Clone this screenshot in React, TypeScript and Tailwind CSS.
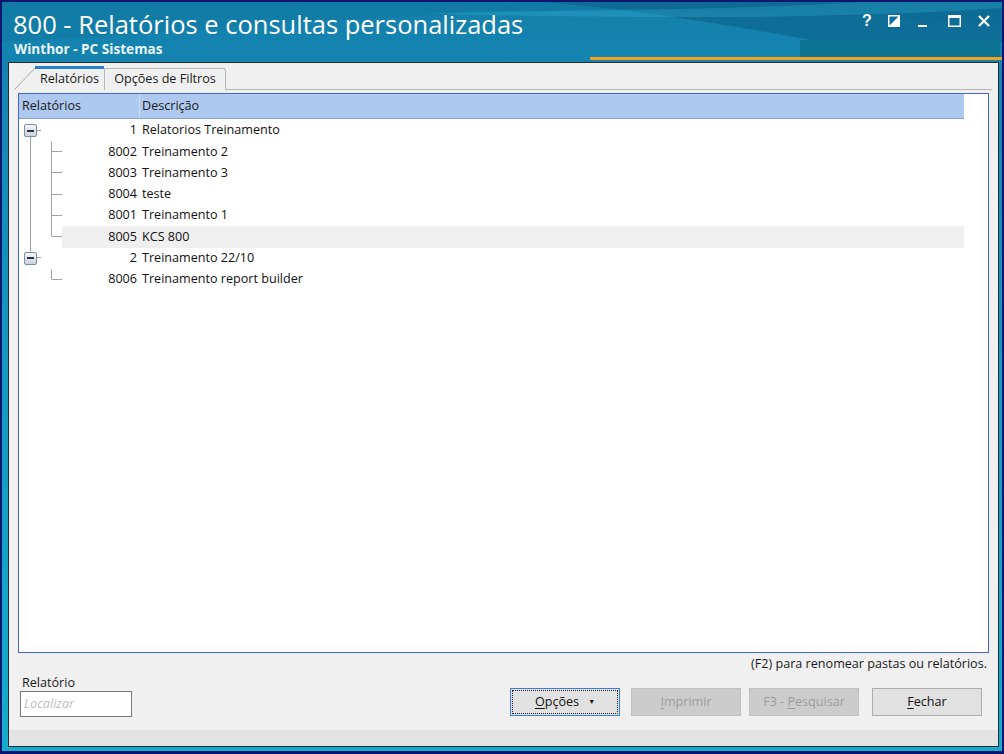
interface Row {
  code: string;
  text: string;
  level: 0 | 1;
  selected?: boolean;
}

const rows: Row[] = [
  { code: '1', text: 'Relatorios Treinamento', level: 0 },
  { code: '8002', text: 'Treinamento 2', level: 1 },
  { code: '8003', text: 'Treinamento 3', level: 1 },
  { code: '8004', text: 'teste', level: 1 },
  { code: '8001', text: 'Treinamento 1', level: 1 },
  { code: '8005', text: 'KCS 800', level: 1, selected: true },
  { code: '2', text: 'Treinamento 22/10', level: 0 },
  { code: '8006', text: 'Treinamento report builder', level: 1 },
];

const ui = { fontFamily: '"Open Sans", "Noto Sans", sans-serif' };

function MinusBox() {
  return (
    <span className="flex h-[13px] w-[13px] items-center justify-center rounded-[2px] border border-[#7d8ea3] bg-gradient-to-b from-[#f4f6f9] to-[#c9d2dd]">
      <span className="h-[2px] w-[7px] bg-[#2b3440]" />
    </span>
  );
}

// tree connector lines for the whole body
function TreeLines() {
  const h = 21.3;
  const c = (i: number) => Math.round(i * h + h / 2) + 0.5;
  return (
    <svg className="pointer-events-none absolute left-0 top-0" width="70" height="200">
      <g stroke="#a0a0a0" strokeWidth="1" fill="none">
        <line x1="11.5" y1={c(0) + 6} x2="11.5" y2={c(6) - 6} />
        <line x1="18" y1={c(0)} x2="22" y2={c(0)} />
        <line x1="18" y1={c(6)} x2="22" y2={c(6)} />
        <line x1="32.5" y1={c(1) - 10} x2="32.5" y2={c(5)} />
        {[1, 2, 3, 4, 5].map((i) => (
          <line key={i} x1="33" y1={c(i)} x2="43" y2={c(i)} />
        ))}
        <line x1="32.5" y1={c(7) - 10} x2="32.5" y2={c(7)} />
        <line x1="33" y1={c(7)} x2="43" y2={c(7)} />
      </g>
    </svg>
  );
}

function Btn({
  label,
  u,
  rest,
  disabled,
  focused,
  className,
  dropdown,
}: {
  label?: string;
  u: string;
  rest: string;
  disabled?: boolean;
  focused?: boolean;
  className?: string;
  dropdown?: boolean;
}) {
  return (
    <div
      className={`flex h-[28px] w-[110px] items-center justify-center text-[12.6px] ${
        disabled
          ? 'border border-[#bfbfbf] bg-[#cccccc] text-[#9c9c9c]'
          : focused
            ? 'border border-[#3c7fd6] bg-[#e1e1e1] p-[1px] text-[#111]'
            : 'border border-[#adadad] bg-[#e1e1e1] text-[#111]'
      } ${className ?? ''}`}
    >
      <div
        className={`flex h-full w-full items-center justify-center gap-[9px] ${
          focused ? 'border border-dotted border-[#222]' : ''
        }`}
      >
        <span>
          {label}
          <span className="underline underline-offset-2">{u}</span>
          {rest}
        </span>
        {dropdown && <span className="mt-[1px] text-[7px]">▼</span>}
      </div>
    </div>
  );
}

export default function App() {
  return (
    <div className="h-[754px] w-[1004px] bg-[#0a1670] px-[2px] pb-[3px] pt-[2px]" style={ui}>
      <div className="relative flex h-full w-full flex-col overflow-hidden bg-gradient-to-b from-[#1480ac] via-[#1699c2] to-[#15acd0] pb-[4px] pl-[6px] pr-[3px]">
        {/* title swooshes */}
        <svg className="absolute left-0 top-0" width="1000" height="60" viewBox="0 0 1000 60">
          <path d="M0 0 H1000 V22 C800 10 650 4 420 14 C300 18 180 30 0 40 Z" fill="#0d6f98" opacity="0.3" />
          <path d="M540 0 C640 8 720 22 820 40 L1000 40 V0 Z" fill="#0b5f86" opacity="0.55" />
          <path d="M420 12 C560 6 700 10 860 0 L1000 0 V6 C820 18 620 16 420 12 Z" fill="#3ac0de" opacity="0.25" />
          <rect x="798" y="38" width="200" height="17" fill="#0c7393" />
          <rect x="588" y="55" width="412" height="3" fill="#f0a21c" />
        </svg>

        {/* title bar */}
        <div className="relative h-[60px] shrink-0">
          <div className="absolute left-[5px] top-[9px] text-[25.5px] leading-[26px] text-white">
            800 - Relatórios e consultas personalizadas
          </div>
          <div className="absolute left-[6px] top-[39px] text-[13.6px] font-bold leading-[16px] text-[#eaf6fb]">
            Winthor - PC Sistemas
          </div>
          <div className="absolute right-[9px] top-[11px] flex items-center text-white">
            <span
              className="w-[26px] text-[16px] font-bold leading-[16px]"
              style={{ fontFamily: '"Liberation Sans", Arial, sans-serif' }}
            >
              ?
            </span>
            <svg width="12" height="12" viewBox="0 0 12 12" className="mr-[18px]">
              <rect x="0.75" y="0.75" width="10.5" height="10.5" fill="none" stroke="white" strokeWidth="1.5" />
              <path d="M0 12 L12 0 L12 12 Z" fill="white" />
            </svg>
            <svg width="10" height="12" viewBox="0 0 10 12" className="mr-[20px]">
              <rect x="0" y="10" width="9" height="2" fill="white" />
            </svg>
            <svg width="13" height="12" viewBox="0 0 13 12" className="mr-[17px]">
              <rect x="0.75" y="0.75" width="11.5" height="10.5" fill="none" stroke="white" strokeWidth="1.5" />
              <rect x="0" y="0" width="13" height="3" fill="white" />
            </svg>
            <svg width="12" height="12" viewBox="0 0 12 12">
              <path d="M1 1 L11 11 M11 1 L1 11" stroke="white" strokeWidth="2.2" />
            </svg>
          </div>
        </div>

        {/* main panel */}
        <div className="relative flex min-h-0 flex-1 flex-col border border-[#2a2a2a] bg-[#f0f0f0]">
          {/* tabs */}
          <div className="flex h-[27px] shrink-0 items-end pl-[5px] pr-[6px] pt-[3px]">
            <svg width="22" height="24" viewBox="0 0 22 24" className="-mr-[1px]">
              <path d="M0.5 23.5 L21.5 1.5" stroke="#a8a8a8" fill="none" />
            </svg>
            <div className="flex h-[24px] w-[69px] items-center justify-center border-t-[3px] border-t-[#2a7fd4] bg-[#f0f0f0] text-[12.6px] text-[#1a1a1a]">
              Relatórios
            </div>
            <div className="flex h-[22px] w-[122px] items-center justify-center rounded-tr-[3px] border border-b-0 border-[#b8b8b8] bg-[#f0f0f0] text-[12.6px] text-[#1a1a1a]">
              Opções de Filtros
            </div>
            <div className="h-[1px] flex-1 bg-[#b4b4b4]" />
          </div>

          {/* grid */}
          <div className="mx-[9px] mt-[3px] flex min-h-0 flex-1 flex-col border border-[#4466c4] bg-white">
            <div className="flex h-[25px] w-[945px] shrink-0 border-b border-b-[#7fa3da] bg-[#adc9ef] text-[12.6px] text-[#1a1a1a]">
              <div className="flex w-[121px] items-center border-r border-r-[#c9dbf4] pl-[3px]">Relatórios</div>
              <div className="flex items-center pl-[2px]">Descrição</div>
            </div>
            <div className="relative pt-[1px] text-[12.6px] text-[#111]">
              <TreeLines />
              {rows.map((r, i) => (
                <div key={i} className="relative flex h-[21.3px] w-[945px] items-center">
                  {r.selected && <div className="absolute bottom-0 left-[43px] right-0 top-0 bg-[#efefef]" />}
                  <div className="relative flex w-[121px] items-center">
                    <span className="w-[43px] pl-[5px]">{r.level === 0 && <MinusBox />}</span>
                    <span className="flex-1 pr-[3px] text-right">{r.code}</span>
                  </div>
                  <span className="relative pl-[2px]">{r.text}</span>
                </div>
              ))}
            </div>
          </div>

          {/* bottom controls */}
          <div className="shrink-0 px-[11px]">
            <div className="mt-[2px] text-right text-[12.6px] leading-[18px] text-[#1a1a1a]">
              (F2) para renomear pastas ou relatórios.
            </div>
            <div className="mt-[1px] flex items-end">
              <div className="flex flex-col">
                <span className="pl-[2px] text-[12.6px] leading-[17px] text-[#1a1a1a]">Relatório</span>
                <div className="flex h-[26px] w-[112px] items-center border border-[#7a7a7a] bg-white pl-[3px] text-[12.6px] italic text-[#bdbdbd]">
                  Localizar
                </div>
              </div>
              <div className="mb-[1px] ml-auto flex items-center pr-[5px]">
                <Btn u="O" rest="pções" focused dropdown className="mr-[11px]" />
                <Btn u="I" rest="mprimir" disabled className="mr-[8px]" />
                <Btn label="F3 - " u="P" rest="esquisar" disabled className="mr-[13px]" />
                <Btn u="F" rest="echar" />
              </div>
            </div>
            <div className="h-[12px]" />
          </div>
          <div className="h-[17px] shrink-0 border-t border-t-[#ececec] bg-[#e3e3e3]" />
        </div>
      </div>
    </div>
  );
}
